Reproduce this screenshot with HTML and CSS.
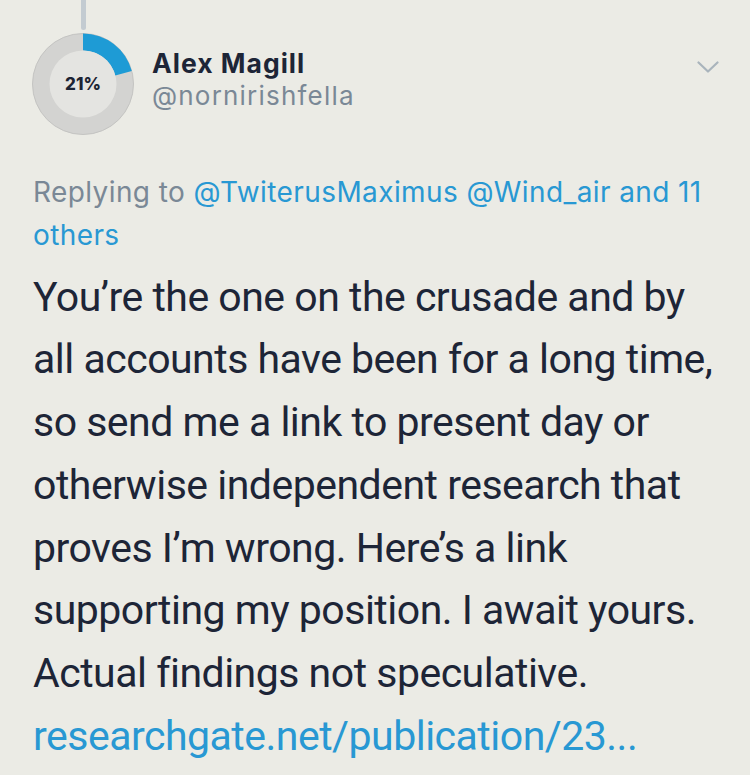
FILE: index.html
```html
<!DOCTYPE html>
<html>
<head>
<meta charset="utf-8">
<link rel="stylesheet" href="styles.css">
</head>
<body>
<div class="tweet">
  <div class="header">
    <div class="avatar-col">
      <div class="thread-line"></div>
      <div class="avatar">
        <svg width="104" height="104" viewBox="0 0 104 104">
          <circle cx="52" cy="52" r="50.5" fill="#d3d3d1" stroke="#c4c4c2" stroke-width="1"/>
          <path d="M52 1.5 A50.5 50.5 0 0 1 100.8 39 L84.3 43.5 A33.5 33.5 0 0 0 52 18.5 Z" fill="#1e9bd5"/>
          <circle cx="52" cy="52" r="33.5" fill="#e4e4e1"/>
        </svg>
        <span class="pct">21%</span>
      </div>
    </div>
    <div class="names">
      <div class="name">Alex Magill</div>
      <div class="handle">@nornirishfella</div>
    </div>
    <svg class="chevron" width="22" height="12" viewBox="0 0 22 12">
      <path d="M1.5 1.5 L11 10.5 L20.5 1.5" fill="none" stroke="#a9b4bc" stroke-width="2.2" stroke-linecap="round" stroke-linejoin="round"/>
    </svg>
  </div>
  <div class="reply">Replying to <span class="link">@TwiterusMaximus @Wind_air and 11 others</span></div>
  <div class="body">
    <div class="line">You’re the one on the crusade and by</div>
    <div class="line">all accounts have been for a long time,</div>
    <div class="line">so send me a link to present day or</div>
    <div class="line">otherwise independent research that</div>
    <div class="line">proves I’m wrong. Here’s a link</div>
    <div class="line">supporting my position. I await yours.</div>
    <div class="line">Actual findings not speculative.</div>
    <div class="line link">researchgate.net/publication/23...</div>
  </div>
</div>
</body>
</html>
```
FILE: styles.css
```css
html, body {
  margin: 0;
  padding: 0;
  background: #ebebe5;
}
body {
  font-family: Roboto, "Noto Sans", sans-serif;
  color: #1d2537;
}
.tweet {
  width: 750px;
  height: 775px;
  overflow: hidden;
  padding: 0 0 0 33px;
  box-sizing: border-box;
}
.header {
  display: flex;
  align-items: flex-start;
  position: relative;
}
.avatar-col {
  display: flex;
  flex-direction: column;
  align-items: center;
  width: 104px;
  margin-left: -2px;
}
.thread-line {
  width: 5px;
  height: 30px;
  background: #c3cbd1;
  border-radius: 0 0 3px 3px;
}
.avatar {
  position: relative;
  width: 104px;
  height: 104px;
  margin-top: 2px;
}
.avatar svg {
  display: block;
}
.pct {
  position: absolute;
  inset: 0;
  display: flex;
  align-items: center;
  justify-content: center;
  font-family: Inter, sans-serif;
  font-weight: 800;
  font-size: 17px;
  color: #1b2333;
}
.names {
  margin-left: 17px;
  padding-top: 47px;
  font-family: Inter, sans-serif;
}
.name {
  font-weight: 700;
  font-size: 26.5px;
  line-height: 32px;
  letter-spacing: 1px;
}
.handle {
  font-size: 26px;
  line-height: 34px;
  color: #7a8896;
  letter-spacing: 1.2px;
}
.chevron {
  position: absolute;
  left: 664px;
  top: 61px;
}
.reply {
  margin-top: 35.3px;
  width: 690px;
  font-family: Inter, sans-serif;
  font-size: 28px;
  line-height: 43px;
  color: #7a8896;
  letter-spacing: 0.4px;
}
.link {
  color: #2898d3;
}
.body {
  margin-top: 8.4px;
  font-size: 41px;
  line-height: 62.7px;
  letter-spacing: -0.5px;
  white-space: nowrap;
}
```
